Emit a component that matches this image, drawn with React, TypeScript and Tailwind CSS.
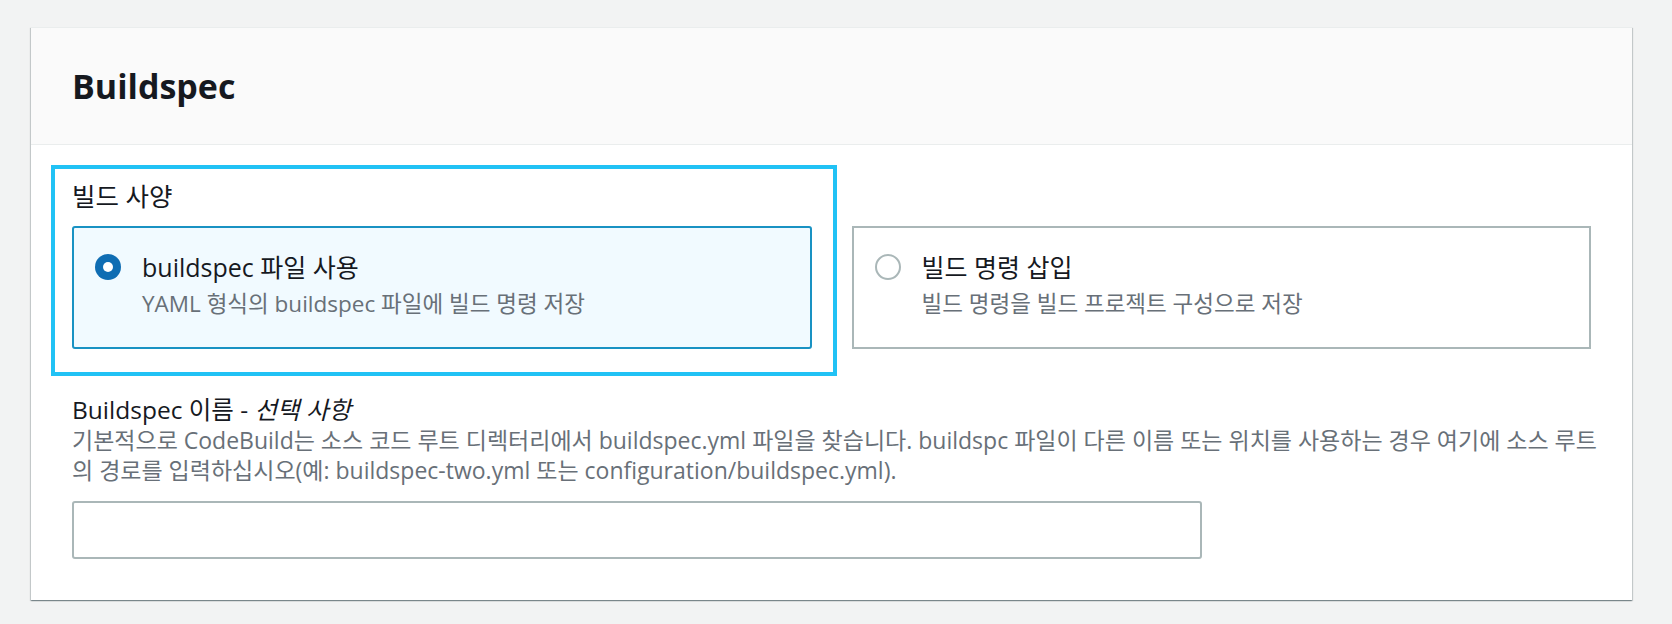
const FONT = "font-['Open_Sans','Noto_Sans_CJK_KR',sans-serif]";

function Radio({ checked }: { checked: boolean }) {
  if (checked) {
    return (
      <span className="flex h-[26px] w-[26px] shrink-0 items-center justify-center rounded-full bg-[#0f6db3]">
        <span className="h-[10px] w-[10px] rounded-full bg-white" />
      </span>
    );
  }
  return <span className="h-[26px] w-[26px] shrink-0 rounded-full border-2 border-[#aab7b8] bg-white" />;
}

function Tile({
  checked,
  title,
  desc,
}: {
  checked: boolean;
  title: string;
  desc: string;
}) {
  return (
    <div
      className={
        checked
          ? "h-[123px] rounded-[3px] border-2 border-[#1992c3] bg-[#f1faff] pl-[21px] pt-[22px]"
          : "h-[123px] border-2 border-[#aab7b8] bg-white pl-[21px] pt-[22px]"
      }
    >
      <div className="flex items-center gap-[21px]">
        <Radio checked={checked} />
        <span className="text-[25px] leading-[34px] text-[#16191f]">{title}</span>
      </div>
      <p className="mt-[5px] pl-[47px] text-[22.5px] leading-[30px] text-[#687078]">{desc}</p>
    </div>
  );
}

export default function App() {
  return (
    <div className={`min-h-[624px] bg-[#f2f3f3] pl-[31px] pt-[27px] ${FONT}`}>
      <div className="w-[1601px] border-t border-[#eaeded] bg-white shadow-[0_1px_1px_0_rgba(0,28,36,0.3),1px_1px_1px_0_rgba(0,28,36,0.15),-1px_1px_1px_0_rgba(0,28,36,0.15)]">
        {/* Header */}
        <div className="border-b border-[#eaeded] bg-[#fafafa] px-[41px] pb-[37px] pt-[38px]">
          <h2 className="text-[34px] font-bold leading-[41px] text-[#16191f]">Buildspec</h2>
        </div>

        {/* Body */}
        <div className="relative px-[41px] pb-[41px] pt-[36px]">
          {/* highlight annotation */}
          <div className="pointer-events-none absolute left-[20px] top-[20px] h-[211px] w-[786px] border-4 border-[#21c2f5]" />

          <p className="text-[25.5px] leading-[30px] text-[#16191f]">빌드 사양</p>
          <div className="mt-[15px] grid grid-cols-2 gap-[40px]">
            <Tile checked title="buildspec 파일 사용" desc="YAML 형식의 buildspec 파일에 빌드 명령 저장" />
            <Tile checked={false} title="빌드 명령 삽입" desc="빌드 명령을 빌드 프로젝트 구성으로 저장" />
          </div>

          <p className="mt-[46px] text-[24.5px] leading-[30px] text-[#16191f]">
            Buildspec 이름 - <i>선택 사항</i>
          </p>
          <p className="whitespace-nowrap text-[23px] leading-[30px] text-[#687078]">
            기본적으로 CodeBuild는 소스 코드 루트 디렉터리에서 buildspec.yml 파일을 찾습니다. buildspc 파일이 다른 이름 또는 위치를 사용하는 경우 여기에 소스 루트
            <br />
            의 경로를 입력하십시오(예: buildspec-two.yml 또는 configuration/buildspec.yml).
          </p>
          <input
            type="text"
            className="mt-[16px] block h-[58px] w-[1130px] rounded-[3px] border-2 border-[#aab7b8] bg-white px-3 text-[21px] outline-none"
          />
        </div>
      </div>
    </div>
  );
}
